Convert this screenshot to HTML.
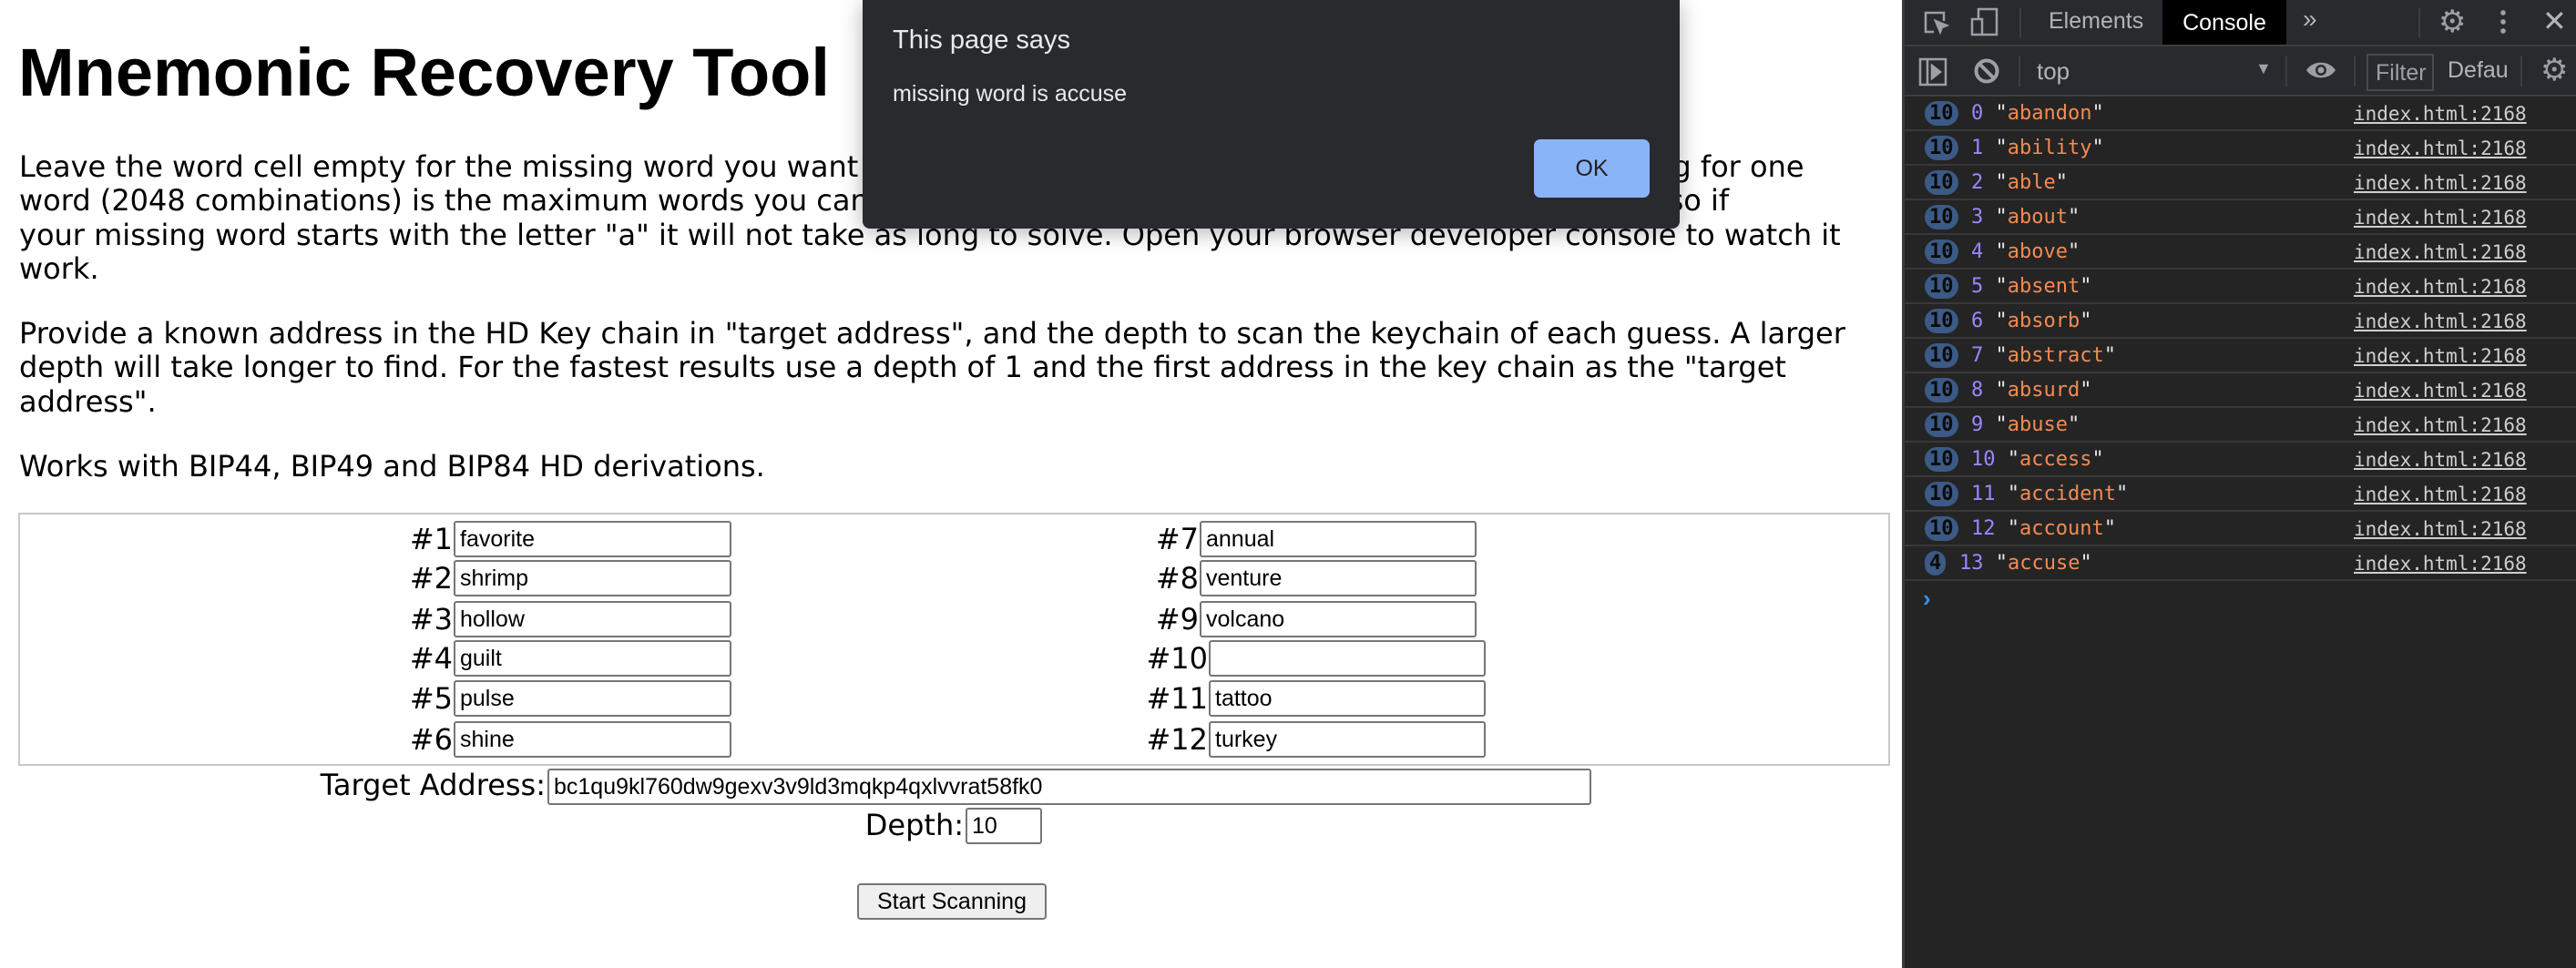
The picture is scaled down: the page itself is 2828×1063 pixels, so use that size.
<!DOCTYPE html>
<html><head><meta charset="utf-8"><style>
*{margin:0;padding:0;box-sizing:border-box}
body{width:2828px;height:1063px;background:#fff;position:relative;overflow:hidden;font-family:"Liberation Sans",Arial,sans-serif;color:#000}
.a{position:absolute;white-space:nowrap}
h1{position:absolute;left:20px;top:38px;font-size:74px;font-weight:bold;line-height:84px}
.p{position:absolute;left:21px;font-family:"DejaVu Sans",sans-serif;font-size:32px;line-height:37.3px;white-space:nowrap}
.box{position:absolute;left:20px;top:563px;width:2055px;height:278px;border:2px solid #c8c8c8}
.lab{position:absolute;font-family:"DejaVu Sans",sans-serif;font-size:32px;line-height:40px;text-align:right}
.in{position:absolute;height:40px;border:2px solid #767676;border-radius:3px;font-size:25px;line-height:36px;padding-left:5px;background:#fff}
.dt{position:absolute;left:2088px;top:0;width:740px;height:1063px;background:#242424;border-left:3px solid #3c3c3c}
.tb{position:absolute;left:0;width:740px;background:#292a2d;border-bottom:2px solid #3d3d3d}
.row{position:absolute;left:0;width:740px;height:38px;border-bottom:2px solid #383838;font-family:"DejaVu Sans Mono","Liberation Mono",monospace;font-size:22px;line-height:38px}
.bd{position:absolute;left:22px;top:5px;height:27px;border-radius:14px;background:#3b5a85;color:#0b0b0b;font-size:22px;font-weight:bold;line-height:27px;padding:0 5px}
.n{color:#9b87ff}.s{color:#f28b54}.q{color:#e8e8e8}
.lk{position:absolute;left:493px;color:#cfcfcf;text-decoration:underline;font-size:21px}
.ic{position:absolute;color:#9aa0a6}
.sep{position:absolute;width:2px;background:#3d3d3d}
</style></head><body>
<h1>Mnemonic Recovery Tool</h1>
<div class="p" style="top:165px">Leave the word cell empty for the missing word you want to solve. The solver will try all the combinations. Solving for one<br>word (2048 combinations) is the maximum words you can solve for. The solver goes through the words in order, so if<br>your missing word starts with the letter "a" it will not take as long to solve. Open your browser developer console to watch it<br>work.</div>
<div class="p" style="top:348px">Provide a known address in the HD Key chain in "target address", and the depth to scan the keychain of each guess. A larger<br>depth will take longer to find. For the fastest results use a depth of 1 and the first address in the key chain as the "target<br>address".</div>
<div class="p" style="top:494px">Works with BIP44, BIP49 and BIP84 HD derivations.</div>
<div class="box"></div>

<div class="lab" style="left:420px;width:77px;top:572px">#1</div><div class="in" style="left:498px;top:572px;width:305px">favorite</div>
<div class="lab" style="left:420px;width:77px;top:615px">#2</div><div class="in" style="left:498px;top:615px;width:305px">shrimp</div>
<div class="lab" style="left:420px;width:77px;top:660px">#3</div><div class="in" style="left:498px;top:660px;width:305px">hollow</div>
<div class="lab" style="left:420px;width:77px;top:703px">#4</div><div class="in" style="left:498px;top:703px;width:305px">guilt</div>
<div class="lab" style="left:420px;width:77px;top:747px">#5</div><div class="in" style="left:498px;top:747px;width:305px">pulse</div>
<div class="lab" style="left:420px;width:77px;top:792px">#6</div><div class="in" style="left:498px;top:792px;width:305px">shine</div>

<div class="lab" style="left:1200px;width:116px;top:572px">#7</div><div class="in" style="left:1317px;top:572px;width:304px">annual</div>
<div class="lab" style="left:1200px;width:116px;top:615px">#8</div><div class="in" style="left:1317px;top:615px;width:304px">venture</div>
<div class="lab" style="left:1200px;width:116px;top:660px">#9</div><div class="in" style="left:1317px;top:660px;width:304px">volcano</div>
<div class="lab" style="left:1200px;width:126px;top:703px">#10</div><div class="in" style="left:1327px;top:703px;width:304px"></div>
<div class="lab" style="left:1200px;width:126px;top:747px">#11</div><div class="in" style="left:1327px;top:747px;width:304px">tattoo</div>
<div class="lab" style="left:1200px;width:126px;top:792px">#12</div><div class="in" style="left:1327px;top:792px;width:304px">turkey</div>

<div class="lab" style="left:200px;width:399px;top:842px">Target Address:</div><div class="in" style="left:601px;top:844px;width:1146px">bc1qu9kl760dw9gexv3v9ld3mqkp4qxlvvrat58fk0</div>
<div class="lab" style="left:858px;width:200px;top:886px">Depth:</div><div class="in" style="left:1060px;top:887px;width:84px">10</div>
<div class="a" style="left:941px;top:970px;width:208px;height:40px;border:2px solid #767676;border-radius:4px;background:#efefef;font-size:25px;line-height:36px;text-align:center">Start Scanning</div>

<div class="dt">
 <div class="tb" style="top:0;height:51px">
  <svg class="ic" style="left:20px;top:11px" width="30" height="28" viewBox="0 0 30 28" fill="none" stroke="#9aa0a6" stroke-width="2.5"><path d="M12 24H3V3h20v9"/><path d="M14 12l12 5-5 2-2 5z" fill="#9aa0a6"/></svg>
  <svg class="ic" style="left:72px;top:8px" width="32" height="32" viewBox="0 0 32 32" fill="none" stroke="#9aa0a6" stroke-width="2.5"><path d="M9 12V2h20v28H13"/><rect x="2" y="13" width="11" height="17"/></svg>
  <div class="sep" style="left:126px;top:9px;height:32px"></div>
  <div class="a" style="left:158px;top:9px;font-size:25px;color:#b4b4b4">Elements</div>
  <div class="a" style="left:283px;top:0;width:136px;height:49px;background:#000;color:#fff;font-size:25px;line-height:50px;text-align:center">Console</div>
  <div class="a" style="left:437px;top:5px;font-size:28px;color:#b4b4b4">»</div>
  <div class="sep" style="left:564px;top:9px;height:32px"></div>
  <div class="a" style="left:586px;top:4px;font-size:34px;color:#9aa0a6">⚙</div>
  <div class="a" style="left:654px;top:9px;width:6px;height:30px;background:radial-gradient(circle,#9aa0a6 2.6px,transparent 3px) 0 0/6px 10px"></div>
  <div class="a" style="left:700px;top:4px;font-size:32px;color:#b4b4b4">✕</div>
 </div>
 <div class="tb" style="top:51px;height:55px">
  <svg class="ic" style="left:15px;top:12px" width="32" height="32" viewBox="0 0 32 32" fill="none" stroke="#9aa0a6" stroke-width="2.5"><rect x="2" y="2" width="28" height="28"/><path d="M10 2v28"/><path d="M15 9l9 7-9 7z" fill="#9aa0a6"/></svg>
  <svg class="ic" style="left:75px;top:12px" width="30" height="30" viewBox="0 0 30 30" fill="none" stroke="#9aa0a6" stroke-width="4"><circle cx="15" cy="15" r="11.5"/><path d="M7 7l16 16"/></svg>
  <div class="sep" style="left:125px;top:10px;height:34px"></div>
  <div class="a" style="left:145px;top:12px;font-size:26px;color:#b4b4b4">top</div>
  <div class="a" style="left:385px;top:14px;font-size:18px;color:#9aa0a6">▼</div>
  <div class="sep" style="left:418px;top:10px;height:34px"></div>
  <svg class="ic" style="left:440px;top:15px" width="34" height="22" viewBox="0 0 34 22"><path d="M1 11C8 0 26 0 33 11C26 22 8 22 1 11Z" fill="#9aa0a6"/><circle cx="17" cy="11" r="6" fill="#292a2d"/><circle cx="17" cy="11" r="3.5" fill="#9aa0a6"/></svg>
  <div class="sep" style="left:493px;top:10px;height:34px"></div>
  <div class="a" style="left:507px;top:8px;width:74px;height:41px;border:2px solid #4a4a4a;color:#9aa0a6;font-size:25px;line-height:38px;padding-left:8px;overflow:hidden">Filter</div>
  <div class="a" style="left:596px;top:12px;font-size:25px;color:#b4b4b4">Defau</div>
  <div class="sep" style="left:676px;top:10px;height:34px"></div>
  <div class="a" style="left:698px;top:6px;font-size:34px;color:#9aa0a6">⚙</div>
 </div>
 <div class="row" style="top:106px"><span class="bd">10</span><span class="a" style="left:73px"><span class="n">0</span> <span class="q">"</span><span class="s">abandon</span><span class="q">"</span></span><span class="lk">index.html:2168</span></div>
 <div class="row" style="top:144px"><span class="bd">10</span><span class="a" style="left:73px"><span class="n">1</span> <span class="q">"</span><span class="s">ability</span><span class="q">"</span></span><span class="lk">index.html:2168</span></div>
 <div class="row" style="top:182px"><span class="bd">10</span><span class="a" style="left:73px"><span class="n">2</span> <span class="q">"</span><span class="s">able</span><span class="q">"</span></span><span class="lk">index.html:2168</span></div>
 <div class="row" style="top:220px"><span class="bd">10</span><span class="a" style="left:73px"><span class="n">3</span> <span class="q">"</span><span class="s">about</span><span class="q">"</span></span><span class="lk">index.html:2168</span></div>
 <div class="row" style="top:258px"><span class="bd">10</span><span class="a" style="left:73px"><span class="n">4</span> <span class="q">"</span><span class="s">above</span><span class="q">"</span></span><span class="lk">index.html:2168</span></div>
 <div class="row" style="top:296px"><span class="bd">10</span><span class="a" style="left:73px"><span class="n">5</span> <span class="q">"</span><span class="s">absent</span><span class="q">"</span></span><span class="lk">index.html:2168</span></div>
 <div class="row" style="top:334px"><span class="bd">10</span><span class="a" style="left:73px"><span class="n">6</span> <span class="q">"</span><span class="s">absorb</span><span class="q">"</span></span><span class="lk">index.html:2168</span></div>
 <div class="row" style="top:372px"><span class="bd">10</span><span class="a" style="left:73px"><span class="n">7</span> <span class="q">"</span><span class="s">abstract</span><span class="q">"</span></span><span class="lk">index.html:2168</span></div>
 <div class="row" style="top:410px"><span class="bd">10</span><span class="a" style="left:73px"><span class="n">8</span> <span class="q">"</span><span class="s">absurd</span><span class="q">"</span></span><span class="lk">index.html:2168</span></div>
 <div class="row" style="top:448px"><span class="bd">10</span><span class="a" style="left:73px"><span class="n">9</span> <span class="q">"</span><span class="s">abuse</span><span class="q">"</span></span><span class="lk">index.html:2168</span></div>
 <div class="row" style="top:486px"><span class="bd">10</span><span class="a" style="left:73px"><span class="n">10</span> <span class="q">"</span><span class="s">access</span><span class="q">"</span></span><span class="lk">index.html:2168</span></div>
 <div class="row" style="top:524px"><span class="bd">10</span><span class="a" style="left:73px"><span class="n">11</span> <span class="q">"</span><span class="s">accident</span><span class="q">"</span></span><span class="lk">index.html:2168</span></div>
 <div class="row" style="top:562px"><span class="bd">10</span><span class="a" style="left:73px"><span class="n">12</span> <span class="q">"</span><span class="s">account</span><span class="q">"</span></span><span class="lk">index.html:2168</span></div>
 <div class="row" style="top:600px"><span class="bd">4</span><span class="a" style="left:60px"><span class="n">13</span> <span class="q">"</span><span class="s">accuse</span><span class="q">"</span></span><span class="lk">index.html:2168</span></div>
 <div class="a" style="left:20px;top:642px;color:#3b8eea;font-size:26px;font-weight:bold">›</div>
</div>

<div class="a" style="left:947px;top:0;width:897px;height:251px;background:#292a2d;border-radius:0 0 8px 8px;box-shadow:0 4px 24px rgba(0,0,0,0.3)">
 <div class="a" style="left:33px;top:28px;font-size:29px;color:#e8eaed">This page says</div>
 <div class="a" style="left:33px;top:89px;font-size:25px;color:#e8eaed">missing word is accuse</div>
 <div class="a" style="left:737px;top:153px;width:127px;height:64px;background:#8ab4f8;border-radius:7px;color:#202124;font-size:25px;line-height:64px;text-align:center">OK</div>
</div>
</body></html>
